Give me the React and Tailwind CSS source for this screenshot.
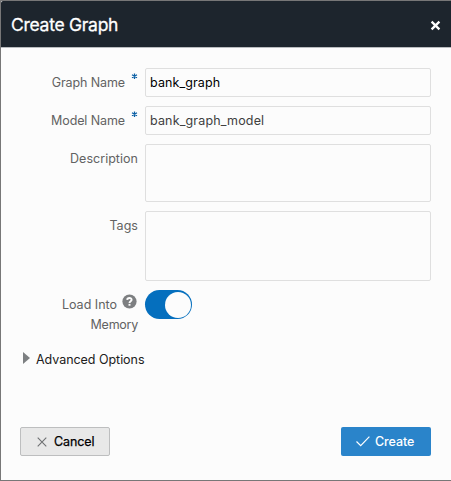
import React from "react";

function Field({ label, required, children }) {
  return (
    <div className="flex items-start">
      <div className="mr-[7px] flex w-[124px] justify-end pt-[5px] whitespace-nowrap text-[12.5px] leading-5 text-[#626262]">
        <label className={required ? "tracking-[-0.1px]" : "tracking-[0.03px]"}>{label}</label>
        {required && <RequiredMark />}
      </div>
      {children}
    </div>
  );
}

function RequiredMark() {
  return (
    <svg className="ml-[6px] h-[7px] w-[7px]" viewBox="0 0 7 7" stroke="#0a5fa5" strokeWidth="1.25" aria-label="required">
      <path d="M3.5 0.5V6M1 1.8L6 4.7M6 1.8L1 4.7" />
    </svg>
  );
}

function HelpIcon() {
  return (
    <svg className="-mt-px ml-[5px] mr-[2px] h-[15px] w-[15px]" viewBox="0 0 15 15" fill="none">
      <circle cx="7.5" cy="7.5" r="7.1" fill="#7d7f81" />
      <path d="M5.2 5.9C5.3 3.3 9.8 3.4 9.6 5.8C9.5 7.2 7.5 7.2 7.5 9" stroke="#fcfcfc" strokeWidth="1.9" />
      <path d="M6.5 9.9h2v1.8h-2z" fill="#fcfcfc" />
    </svg>
  );
}

const box = "w-[286px] rounded-[2px] border border-[#dfdfdf] bg-[#fcfcfc] px-1 text-[12.5px]";

export default function App() {
  return (
    <div className="flex h-[481px] w-[451px] flex-col overflow-hidden border-t border-b border-l border-[#777777] bg-[#fcfcfc] font-['Inter',sans-serif]">
      <header className="flex h-[47px] shrink-0 items-center justify-between rounded-tl-[2px] border-b border-[#b9bcbf] bg-[#1d252d] pl-[10px] pr-[10px]">
        <h1 className="mt-[2px] text-[17.5px] font-normal leading-6 tracking-[-0.28px] text-white [-webkit-text-stroke:0.3px_white]">Create Graph</h1>
        <svg className="mt-[3px] h-[11px] w-[11px]" viewBox="0 0 11 11" stroke="white" strokeWidth="2.3">
          <path d="M1.6 1.6L9.4 9.4M9.4 1.6L1.6 9.4" />
        </svg>
      </header>
      <main className="flex flex-col gap-[9px] pt-5 pl-[13px]">
        <Field label="Graph Name" required>
          <div className={`${box} h-[29px] leading-[28px] tracking-[0.1px] text-black`}>bank_graph</div>
        </Field>
        <Field label="Model Name" required>
          <div className={`${box} h-[29px] leading-[28px] tracking-[0.16px] text-[#404040]`}>bank_graph_model</div>
        </Field>
        <Field label="Description">
          <div className={`${box} h-[58px]`} />
        </Field>
        <Field label="Tags">
          <div className={`${box} h-[70px]`} />
        </Field>
        <div className="flex items-start">
          <div className="mr-[6px] w-[125px] pt-[5px] text-right text-[12.5px] leading-5 text-[#626262]">
            <div className="flex justify-end">
              <span>Load Into</span>
              <HelpIcon />
            </div>
            <div className="pr-px tracking-[-0.25px]">Memory</div>
          </div>
          <div className="flex h-[29px] w-[47px] items-center justify-end rounded-full bg-[#056fbe] pr-px">
            <div className="h-[26px] w-[26px] rounded-full bg-[#fcfcfc]" />
          </div>
        </div>
      </main>
      <div className="mt-[15px] flex items-center pl-[22px] text-[12.5px] leading-5 tracking-[-0.04px] text-[#202020]">
        <svg className="mr-[6px] -mt-[4px] h-[12px] w-[7px]" viewBox="0 0 7 12" fill="#7d8082">
          <path d="M0 0L7 6L0 12z" />
        </svg>
        Advanced Options
      </div>
      <footer className="mt-[57px] flex justify-between pr-5 pl-[19px]">
        <button className="flex h-[29px] w-[90px] items-center rounded-[2px] border border-[#bdbebf] bg-[#e8e8e8] pl-4 text-[12.5px] font-normal text-black">
          <svg className="mr-[7px] h-[10px] w-[10px]" viewBox="0 0 10 10" stroke="#6f7173" strokeWidth="1.1">
            <path d="M0.7 0.7L9.3 9.3M9.3 0.7L0.7 9.3" />
          </svg>
          <span className="pt-[2px] tracking-[-0.1px] [-webkit-text-stroke:0.25px_black]">Cancel</span>
        </button>
        <button className="flex h-[29px] w-[90px] items-center rounded-[2px] bg-[#2a84ca] pl-[15px] text-[12.5px] font-medium text-white">
          <svg className="mr-[5px] h-[11px] w-[14px]" viewBox="0 0 14 11" fill="none" stroke="white" strokeWidth="1.2">
            <path d="M0.5 5.5L4.7 9.7L13.4 0.7" />
          </svg>
          <span className="pt-[2px] tracking-[-0.1px]">Create</span>
        </button>
      </footer>
    </div>
  );
}
